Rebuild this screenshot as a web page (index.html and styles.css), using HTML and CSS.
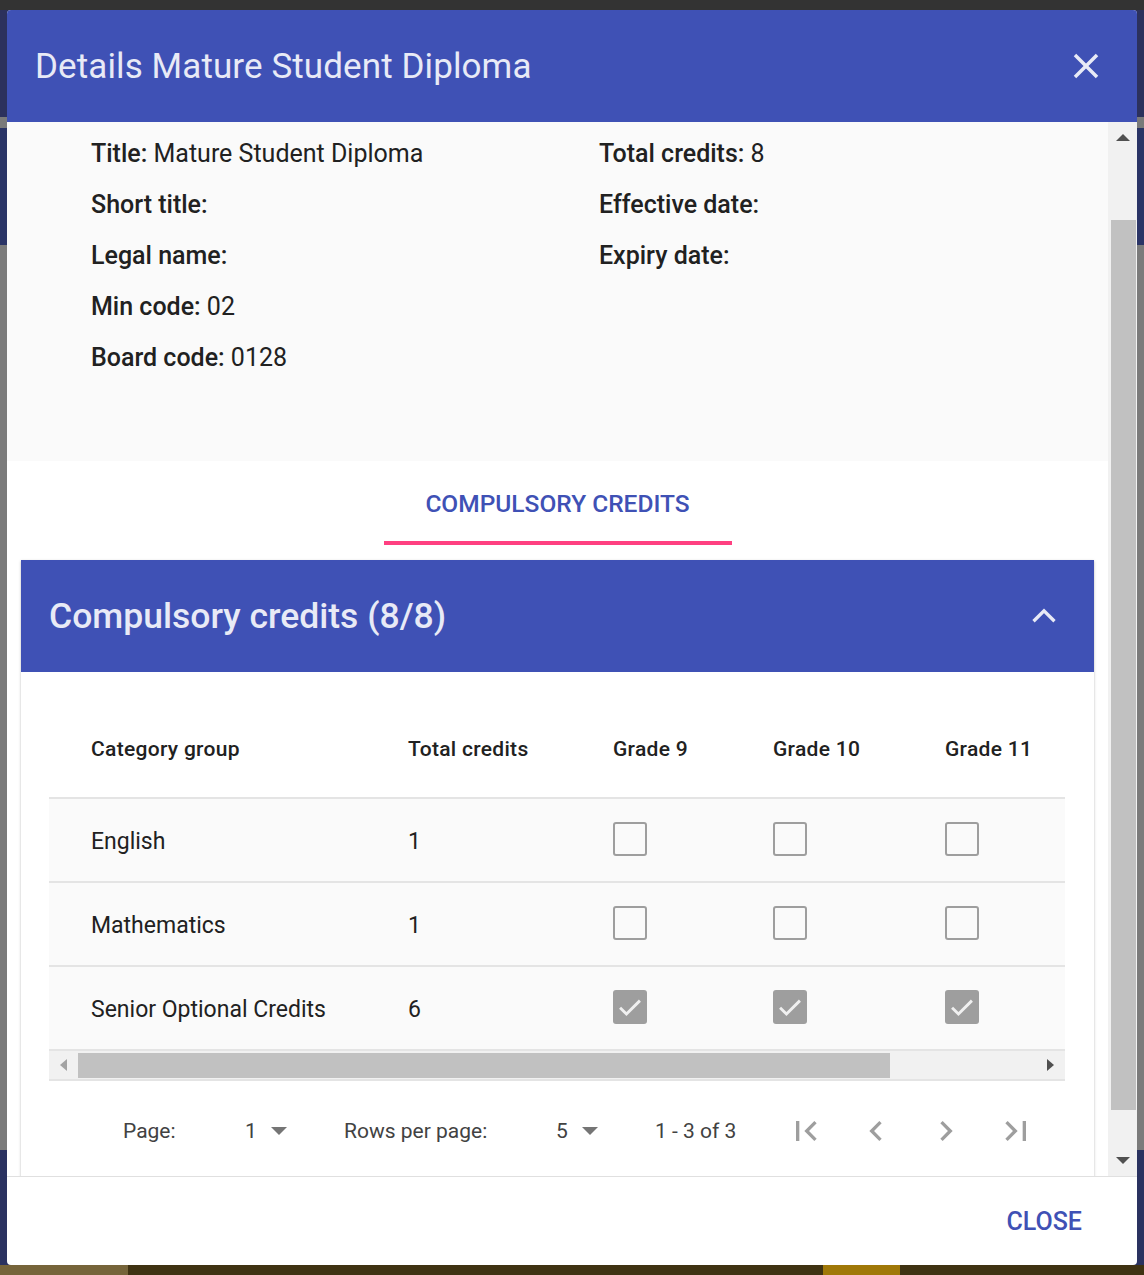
FILE: index.html
```html
<!DOCTYPE html>
<html>
<head>
<meta charset="utf-8">
<link rel="stylesheet" href="styles.css">
</head>
<body>
<div class="dialog">
  <div class="dlg-header">
    <h1 class="dlg-title">Details Mature Student Diploma</h1>
    <svg class="close-icon" viewBox="0 0 24 24"><path d="M19 6.41 17.59 5 12 10.59 6.41 5 5 6.41 10.59 12 5 17.59 6.41 19 12 13.41 17.59 19 19 17.59 13.41 12z"/></svg>
  </div>
  <div class="dlg-body">
    <div class="scroll-content">
      <section class="info">
        <div class="info-col">
          <p class="info-row"><b>Title:</b> Mature Student Diploma</p>
          <p class="info-row"><b>Short title:</b></p>
          <p class="info-row"><b>Legal name:</b></p>
          <p class="info-row"><b>Min code:</b> 02</p>
          <p class="info-row"><b>Board code:</b> 0128</p>
        </div>
        <div class="info-col">
          <p class="info-row"><b>Total credits:</b> 8</p>
          <p class="info-row"><b>Effective date:</b></p>
          <p class="info-row"><b>Expiry date:</b></p>
        </div>
      </section>
      <nav class="tabs">
        <div class="tab">COMPULSORY CREDITS</div>
      </nav>
      <section class="panel">
        <div class="panel-header">
          <h2 class="panel-title">Compulsory credits (8/8)</h2>
          <svg class="chev" viewBox="0 0 24 24"><path d="M5 15.5 12 8.5 19 15.5"/></svg>
        </div>
        <div class="panel-body">
          <div class="table">
            <div class="tr thead">
              <div class="td first">Category group</div>
              <div class="td">Total credits</div>
              <div class="td">Grade 9</div>
              <div class="td">Grade 10</div>
              <div class="td">Grade 11</div>
            </div>
            <div class="tr">
              <div class="td first">English</div>
              <div class="td">1</div>
              <div class="td"><span class="cb"></span></div>
              <div class="td"><span class="cb"></span></div>
              <div class="td"><span class="cb"></span></div>
            </div>
            <div class="tr">
              <div class="td first">Mathematics</div>
              <div class="td">1</div>
              <div class="td"><span class="cb"></span></div>
              <div class="td"><span class="cb"></span></div>
              <div class="td"><span class="cb"></span></div>
            </div>
            <div class="tr">
              <div class="td first">Senior Optional Credits</div>
              <div class="td">6</div>
              <div class="td"><span class="cb checked"><svg viewBox="0 0 24 24"><path d="M5 12.5 9.5 17 19 7.5"/></svg></span></div>
              <div class="td"><span class="cb checked"><svg viewBox="0 0 24 24"><path d="M5 12.5 9.5 17 19 7.5"/></svg></span></div>
              <div class="td"><span class="cb checked"><svg viewBox="0 0 24 24"><path d="M5 12.5 9.5 17 19 7.5"/></svg></span></div>
            </div>
            <div class="hscroll">
              <span class="arr arr-left"></span>
              <span class="hthumb"></span>
              <span class="arr arr-right"></span>
            </div>
          </div>
          <div class="pager">
            <span class="p-label">Page:</span>
            <span class="p-select">1<span class="drop"></span></span>
            <span class="p-label">Rows per page:</span>
            <span class="p-select">5<span class="drop"></span></span>
            <span class="p-range">1 - 3 of 3</span>
            <span class="p-icons">
              <svg class="pi" viewBox="0 0 24 24"><path d="M18.41 16.59 13.82 12l4.59-4.59L17 6l-6 6 6 6zM6 6h2v12H6z"/></svg>
              <svg class="pi" viewBox="0 0 24 24"><path d="M15.41 7.41 14 6l-6 6 6 6 1.41-1.41L10.83 12z"/></svg>
              <svg class="pi" viewBox="0 0 24 24"><path d="M10 6 8.59 7.41 13.17 12l-4.58 4.59L10 18l6-6z"/></svg>
              <svg class="pi" viewBox="0 0 24 24"><path d="M5.59 7.41 10.18 12l-4.59 4.59L7 18l6-6-6-6zM16 6h2v12h-2z"/></svg>
            </span>
          </div>
        </div>
      </section>
    </div>
    <div class="vscroll">
      <span class="varr up"></span>
      <span class="vthumb"></span>
      <span class="varr down"></span>
    </div>
  </div>
  <div class="dlg-footer">
    <button class="btn-close">CLOSE</button>
  </div>
</div>
</body>
</html>
```

FILE: styles.css
```css
* { box-sizing: border-box; }
html, body { height: 100%; }
body {
  margin: 0;
  padding: 10px 7px 10px 7px;
  font-family: Roboto, "Noto Sans", "Liberation Sans", sans-serif;
  color: #212121;
  background:
    linear-gradient(#333, #333) top left / 100% 10px no-repeat,
    linear-gradient(to right, #76643a 0 128px, #3f3212 128px 823px, #a07808 823px 900px, #3f3212 900px) bottom left / 100% 10px no-repeat,
    linear-gradient(to bottom, #2c315c 0 117px, #7a7a7a 117px 128px, #2a3466 128px 245px, #7b7b7b 245px 1150px, #2a3260 1150px);
  overflow: hidden;
}
.dialog {
  width: 1130px;
  height: 1255px;
  background: #fff;
  border-radius: 4px;
  overflow: hidden;
  display: flex;
  flex-direction: column;
}
.dlg-header {
  height: 112px;
  flex: none;
  background: #3f51b5;
  display: flex;
  align-items: center;
  justify-content: space-between;
  padding: 0 30px 0 28px;
}
.dlg-title {
  margin: 0;
  font-size: 35px;
  font-weight: 400;
  color: #e8eaf6;
  letter-spacing: 0.1px;
}
.close-icon { width: 42px; height: 42px; fill: #e8eaf6; }

.dlg-body {
  flex: none;
  height: 1055px;
  display: flex;
  border-bottom: 1px solid #e0e0e0;
}
.scroll-content {
  flex: 1;
  overflow: hidden;
  min-width: 0;
}
.info {
  height: 339px;
  background: #fafafa;
  display: grid;
  grid-template-columns: 508px 1fr;
  padding: 17px 0 0 84px;
}
.info-row {
  margin: 0;
  height: 51px;
  font-size: 25px;
  line-height: 30px;
}
.info-row b { font-weight: 500; }

.tabs {
  height: 99px;
  display: flex;
  justify-content: center;
}
.tab {
  width: 348px;
  height: 84px;
  border-bottom: 4px solid #ff4081;
  color: #3f51b5;
  font-size: 24.5px;
  font-weight: 500;
  display: flex;
  align-items: center;
  justify-content: center;
  padding-top: 4px;
}

.panel {
  margin: 0 14px;
  box-shadow: 0 1px 3px rgba(0,0,0,0.2), 0 1px 1px rgba(0,0,0,0.12);
}
.panel-header {
  height: 112px;
  background: #3f51b5;
  display: flex;
  align-items: center;
  justify-content: space-between;
  padding: 0 32px 0 28px;
}
.panel-title {
  margin: 0;
  font-size: 35.5px;
  font-weight: 500;
  color: #e8eaf6;
}
.chev { width: 36px; height: 36px; fill: none; stroke: #e8eaf6; stroke-width: 2.2; }
.panel-body {
  background: #fff;
  padding: 28px 28px 60px 28px;
}
.table { width: 1016px; }
.tr {
  display: grid;
  grid-template-columns: 359px 205px 160px 172px 120px;
  height: 84px;
  align-items: center;
  background: #fafafa;
  border-bottom: 2px solid #e4e4e4;
  font-size: 23px;
}
.tr.thead {
  height: 99px;
  background: #fff;
  font-size: 21px;
  font-weight: 500;
  letter-spacing: 0.3px;
}
.td { white-space: nowrap; padding-top: 3px; }
.thead .td { padding-top: 0; }
.td.first { padding-left: 42px; }
.cb {
  display: block;
  width: 34px;
  height: 34px;
  margin-top: -5px;
  border: 2.5px solid #9e9e9e;
  border-radius: 3px;
}
.cb.checked { background: #9e9e9e; border: none; }
.cb svg { width: 34px; height: 34px; fill: none; stroke: #f0f0f0; stroke-width: 2; display: block; }

.hscroll {
  height: 30px;
  background: #f1f1f1;
  border-bottom: 2px solid #e4e4e4;
  display: flex;
  align-items: center;
}
.hthumb {
  margin-left: 11px;
  width: 812px;
  height: 25px;
  background: #c1c1c1;
}
.arr { width: 0; height: 0; border-top: 6px solid transparent; border-bottom: 6px solid transparent; }
.arr-left { margin-left: 11px; border-right: 7px solid #a3a3a3; }
.arr-right { margin-left: auto; margin-right: 11px; border-left: 7px solid #505050; }

.pager {
  display: grid;
  grid-template-columns: 122px 99px 212px 99px 131px auto;
  align-items: center;
  height: 100px;
  font-size: 21px;
  color: #424242;
  padding-left: 74px;
}
.p-select { display: flex; align-items: center; }
.drop {
  width: 0; height: 0;
  border-left: 8px solid transparent;
  border-right: 8px solid transparent;
  border-top: 8px solid #757575;
  margin-left: 14px;
}
.p-icons { display: flex; gap: 30px; }
.pi { width: 40px; height: 40px; fill: #9e9e9e; }

.vscroll {
  width: 29px;
  flex: none;
  background: #f1f1f1;
  display: flex;
  flex-direction: column;
  align-items: center;
  padding: 12px 0 12px 1px;
}
.varr { width: 0; height: 0; border-left: 7px solid transparent; border-right: 7px solid transparent; }
.varr.up { border-bottom: 7px solid #505050; }
.varr.down { border-top: 7px solid #505050; }
.vthumb {
  width: 25px;
  height: 890px;
  background: #c1c1c1;
  margin: 79px 0 auto 0;
}

.dlg-footer {
  flex: 1;
  display: flex;
  align-items: center;
  justify-content: flex-end;
  padding: 0 55px 0 0;
}
.btn-close {
  border: none;
  background: none;
  padding: 0;
  font-family: inherit;
  font-size: 25px;
  font-weight: 500;
  color: #3f51b5;
}
```
